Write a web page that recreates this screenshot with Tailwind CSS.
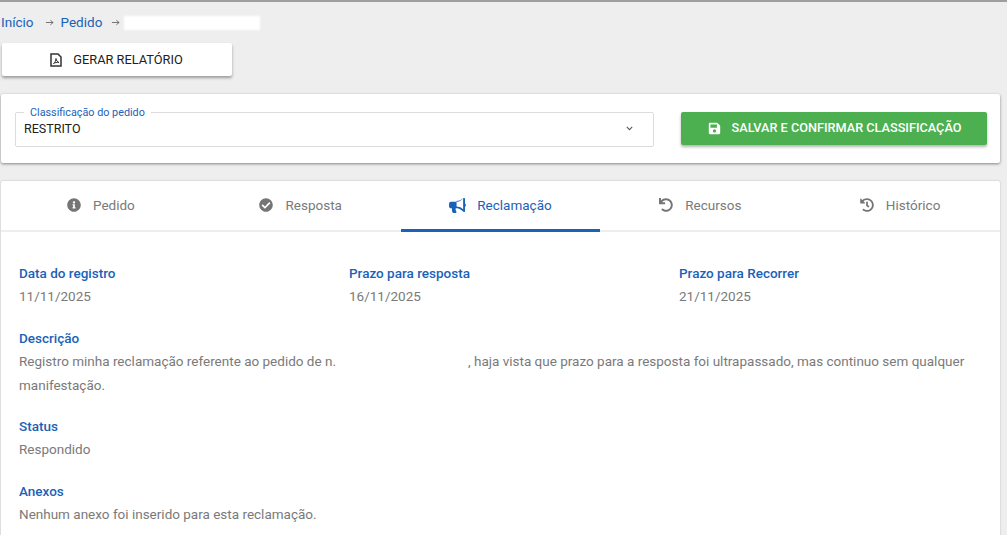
<!DOCTYPE html>
<html lang="pt-BR">

<head>
    <meta charset="UTF-8">
    <title>Pedido</title>
    <script src="https://cdn.jsdelivr.net/npm/@tailwindcss/browser@4"></script>
</head>

<body class="bg-white font-['Roboto',sans-serif] h-[540px] w-[1007px] overflow-hidden">
    <div class="h-[535px] overflow-hidden bg-[#eeeeee] border-t-2 border-[#9e9e9e]">
        <!-- Breadcrumb -->
        <nav class="flex items-center h-[41px] pl-[1px] text-[13.5px] text-[#1a62b8]">
            <span>Início</span>
            <svg class="w-[9px] h-[9px] ml-[11px] mr-[7px]" viewBox="0 0 10 10" fill="none" stroke="#666" stroke-width="1"><path d="M1 5h8M6 2.500 9 5 6 7.500"/></svg>
            <span>Pedido</span>
            <svg class="w-[9px] h-[9px] ml-[9px] mr-[4px]" viewBox="0 0 10 10" fill="none" stroke="#666" stroke-width="1"><path d="M1 5h8M6 2.500 9 5 6 7.500"/></svg>
            <span class="w-[136px] h-[14px] bg-white blur-[1px]"></span>
        </nav>

        <!-- Relatorio -->
        <button class="ml-[2px] w-[230px] h-[33px] bg-white rounded-[2px] shadow-[0_2px_3px_rgba(0,0,0,0.35)] flex items-center justify-center gap-[11px] pr-[1px] text-[12.800px] text-[#212121]">
            <svg class="w-[12px] h-[14px]" viewBox="0 0 12 14" fill="none" stroke="#333" stroke-width="1.500"><path d="M1 1h7l3 3v9H1z"/><path d="M3.500 10.500c1.500-1 2.500-3 2.500-5 .3 2 1.500 3.500 3 4-2-.3-4 0-5.500 1z" stroke-width="1"/></svg>
            <span>GERAR RELATÓRIO</span>
        </button>

        <!-- Classificacao -->
        <section class="mt-[18px] ml-[1px] w-[999px] h-[69px] bg-white rounded-[2px] shadow-[0_1px_3px_rgba(0,0,0,0.45)] flex items-start pt-[18px] pl-[14px]">
            <div class="relative w-[639px] h-[35px] border border-[#dcdcdc] rounded-[2px] flex items-center justify-between pl-[8px] pr-[20px] text-[12.500px] text-[#212121]">
                <span class="absolute -top-[7px] left-[8px] bg-white px-[6px] text-[10.800px] leading-[13px] text-[#1a62b8]">Classificação do pedido</span>
                <span>RESTRITO</span>
                <svg class="w-[7px] h-[5px] mb-[2px]" viewBox="0 0 9 6" fill="none" stroke="#555" stroke-width="1.300"><path d="M1 1l3.500 3.500L8 1"/></svg>
            </div>
            <button class="ml-[27px] w-[306px] h-[33px] bg-[#4caf50] rounded-[2px] shadow-[0_2px_3px_rgba(0,0,0,0.3)] flex items-center justify-center gap-[11px] pl-[1px] pb-[1px] text-[12.700px] font-medium text-white">
                <svg class="w-[13px] h-[13px]" viewBox="0 0 448 512" fill="#fff"><path d="M433.900 129.900l-83.900-83.900A48 48 0 0 0 316.100 32H48C21.500 32 0 53.500 0 80v352c0 26.500 21.500 48 48 48h352c26.500 0 48-21.500 48-48V163.900a48 48 0 0 0-14.100-34zM224 416c-35.300 0-64-28.700-64-64 0-35.300 28.700-64 64-64s64 28.700 64 64c0 35.300-28.700 64-64 64zm96-304.500V212c0 6.600-5.400 12-12 12H76c-6.600 0-12-5.400-12-12V108c0-6.600 5.400-12 12-12h228.500c3.200 0 6.200 1.300 8.500 3.500l3.500 3.500c2.300 2.300 3.500 5.300 3.500 8.500z"/></svg>
                <span>SALVAR E CONFIRMAR CLASSIFICAÇÃO</span>
            </button>
        </section>

        <!-- Abas -->
        <section class="mt-[18px] ml-[1px] w-[999px] h-[400px] bg-white rounded-[2px] shadow-[0_0_2px_rgba(0,0,0,0.25)]">
            <div class="grid grid-cols-5 h-[51px] border-b-2 border-[#eeeeee] text-[13.500px] text-[#7a7a7a]">
                <div class="flex items-center justify-center gap-[12px] pb-[1px]">
                    <svg class="w-[14px] h-[14px]" viewBox="0 0 512 512" fill="#757575"><path d="M256 8C119 8 8 119 8 256s111 248 248 248 248-111 248-248S393 8 256 8zm0 110c23.200 0 42 18.800 42 42s-18.800 42-42 42-42-18.800-42-42 18.800-42 42-42zm56 254c0 6.600-5.400 12-12 12h-88c-6.600 0-12-5.400-12-12v-24c0-6.600 5.400-12 12-12h12v-64h-12c-6.600 0-12-5.400-12-12v-24c0-6.600 5.400-12 12-12h64c6.600 0 12 5.400 12 12v100h12c6.600 0 12 5.400 12 12v24z"/></svg>
                    <span>Pedido</span>
                </div>
                <div class="flex items-center justify-center gap-[12px] pb-[1px]">
                    <svg class="w-[14px] h-[14px]" viewBox="0 0 512 512" fill="#757575"><path d="M504 256c0 137-111 248-248 248S8 393 8 256 119 8 256 8s248 111 248 248zM227.300 387.300l184-184c6.200-6.200 6.200-16.400 0-22.600l-22.600-22.600c-6.200-6.200-16.400-6.200-22.600 0L216 308.100l-70.100-70.100c-6.200-6.200-16.400-6.200-22.600 0l-22.600 22.600c-6.200 6.200-6.200 16.400 0 22.600l104 104c6.200 6.200 16.400 6.200 22.600 0z"/></svg>
                    <span>Resposta</span>
                </div>
                <div class="relative flex items-center justify-center gap-[11px] pb-[1px] text-[#1a62b8]">
                    <svg class="w-[17px] h-[15px]" viewBox="0 0 576 512" fill="#1a62b8"><path d="M576 240c0-23.600-12.900-44-32-55.100V32c0-8.700-7-32-32-32-7.100 0-14.200 2.400-20 7l-85 68c-42.700 34.100-96.300 53-151 53H64c-35.300 0-64 28.700-64 64v96c0 35.300 28.700 64 64 64h33.700c-1.400 10.500-2.200 21.100-2.200 32 0 39.800 9.300 77.400 25.600 110.900 5.200 10.700 16.500 17.100 28.400 17.100h74.300c26.100 0 41.700-29.800 25.900-50.600-16.400-21.600-26.200-48.500-26.200-77.400 0-11.100 1.600-21.800 4.400-32H256c54.700 0 108.300 18.900 151 53l85 68c5.700 4.600 12.800 7 20 7 24.900 0 32-22.800 32-32V295.100c19.100-11.100 32-31.500 32-55.100zm-96 141.400l-33-26.400c-54-43.200-121.800-67-191-67v-184c69.200 0 137-23.800 191-67l33-26.400v370.800z"/></svg>
                    <span>Reclamação</span>
                    <span class="absolute left-0 right-0 -bottom-[2px] h-[3px] bg-[#1a62b8]"></span>
                </div>
                <div class="flex items-center justify-center gap-[12px] pb-[1px]">
                    <svg class="w-[14px] h-[14px]" viewBox="0 0 512 512" fill="#757575"><path d="M212.300 224.300H12c-6.600 0-12-5.400-12-12V12C0 5.400 5.400 0 12 0h48c6.600 0 12 5.400 12 12v78.100C117.800 39.300 184.300 7.500 258.200 8c136.900.9 246.300 111.700 245.800 248.600C503.500 393.200 392.700 504 256 504c-64.100 0-122.500-24.400-166.600-64.300-5.100-4.600-5.300-12.600-.5-17.400l34-34c4.500-4.500 11.700-4.700 16.400-.5C170.800 415.300 211.600 432 256 432c97.300 0 176-78.700 176-176 0-97.300-78.700-176-176-176-58.500 0-110.300 28.500-142.300 72.300h98.600c6.600 0 12 5.400 12 12v48c0 6.600-5.400 12-12 12z"/></svg>
                    <span>Recursos</span>
                </div>
                <div class="flex items-center justify-center gap-[12px] pb-[1px]">
                    <svg class="w-[14px] h-[14px]" viewBox="0 0 512 512" fill="#757575"><path d="M504 255.500c.3 136.600-111.200 248.400-247.800 248.500-59 0-113.200-20.500-155.800-54.900-11.100-8.900-11.900-25.500-1.800-35.600l11.300-11.300c8.600-8.600 22.400-9.600 31.900-2 31.400 24.900 71.100 39.800 114.200 39.800 101.400 0 182-82 182-184 0-101.200-82-184-184-184-48.600 0-92.800 18.900-125.700 49.700l50.700 50.700c10.100 10.100 2.900 27.300-11.300 27.300H24c-8.800 0-16-7.200-16-16V38.600c0-14.300 17.200-21.400 27.300-11.300l49.400 49.400C129.300 34.100 189.600 8 256 8c136.700 0 247.700 110.800 248 247.500zM323 334l9.800-12.600c8.100-10.500 6.300-25.500-4.200-33.700L288 256.100V152c0-13.300-10.700-24-24-24h-16c-13.300 0-24 10.700-24 24v135.700l65.300 50.800c10.500 8.100 25.500 6.300 33.700-4.200z"/></svg>
                    <span>Histórico</span>
                </div>
            </div>

            <div class="pl-[18px] pr-[18px] text-[13.500px] leading-[24px] text-[#7a7a7a]">
                <div class="grid grid-cols-[330px_330px_1fr] pt-[30px]">
                    <div>
                        <h3 class="font-medium text-[#1a62b8] leading-[22px]">Data do registro</h3>
                        <p class="leading-[24px]">11/11/2025</p>
                    </div>
                    <div>
                        <h3 class="font-medium text-[#1a62b8] leading-[22px]">Prazo para resposta</h3>
                        <p class="leading-[24px]">16/11/2025</p>
                    </div>
                    <div>
                        <h3 class="font-medium text-[#1a62b8] leading-[22px]">Prazo para Recorrer</h3>
                        <p class="leading-[24px]">21/11/2025</p>
                    </div>
                </div>
                <div class="mt-[20px]">
                    <h3 class="font-medium text-[#1a62b8] leading-[21px]">Descrição</h3>
                    <p class="flex"><span>Registro minha reclamação referente ao pedido de n.</span><span class="ml-[132px]">, haja vista que prazo para a resposta foi ultrapassado, mas continuo sem qualquer</span></p>
                    <p>manifestação.</p>
                </div>
                <div class="mt-[18px]">
                    <h3 class="font-medium text-[#1a62b8] leading-[22px]">Status</h3>
                    <p class="leading-[24px]">Respondido</p>
                </div>
                <div class="mt-[19px]">
                    <h3 class="font-medium text-[#1a62b8] leading-[22px]">Anexos</h3>
                    <p class="leading-[24px]">Nenhum anexo foi inserido para esta reclamação.</p>
                </div>
            </div>
        </section>
    </div>
</body>

</html>
